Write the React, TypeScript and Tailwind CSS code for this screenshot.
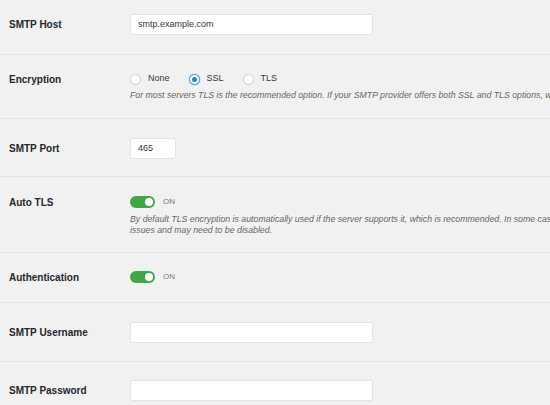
import React from 'react';

const font = { fontFamily: '"Liberation Sans", Arial, sans-serif' };

function Label({ children, h }: { children: React.ReactNode; h: string }) {
  return (
    <div className={`w-[130px] shrink-0 pl-[9px] flex items-center text-[10px] font-bold text-[#23282d] ${h}`}>
      {children}
    </div>
  );
}

function Radio({ label, checked }: { label: string; checked?: boolean }) {
  return (
    <div className="flex items-center gap-[7px]">
      <span
        className={`w-[11px] h-[11px] rounded-full bg-white border flex items-center justify-center ${
          checked ? 'border-[#5b9dd9] shadow-[0_0_1px_#1e8cbe]' : 'border-[#c8ccd0]'
        }`}
      >
        {checked && <span className="w-[5px] h-[5px] rounded-full bg-[#1e8cbe]" />}
      </span>
      <span className="text-[9px] text-[#32373c]">{label}</span>
    </div>
  );
}

function Toggle() {
  return (
    <div className="flex items-center gap-[8px] h-[12px]">
      <span className="w-[25px] h-[12px] rounded-full bg-[#3fa845] flex items-center justify-end pr-[2px]">
        <span className="w-[8px] h-[8px] rounded-full bg-white" />
      </span>
      <span className="text-[8px] text-[#72777c]">ON</span>
    </div>
  );
}

function Input({ value, w }: { value?: string; w: string }) {
  return (
    <div
      className={`h-[21px] bg-white border border-[#e4e4e4] rounded-[2px] flex items-center px-[7px] text-[9px] text-[#32373c] ${w}`}
    >
      {value}
    </div>
  );
}

export default function App() {
  return (
    <div className="w-[550px] h-[405px] overflow-hidden bg-[#f1f1f1]" style={font}>
      {/* SMTP Host */}
      <div className="flex pt-[14px] pb-[19px] border-b border-[#e3e3e3]">
        <Label h="h-[21px]">SMTP Host</Label>
        <Input value="smtp.example.com" w="w-[243px]" />
      </div>

      {/* Encryption */}
      <div className="flex pt-[18px] pb-[17px] border-b border-[#e3e3e3]">
        <Label h="h-[12px]">Encryption</Label>
        <div>
          <div className="flex items-center gap-[19px] h-[12px]">
            <Radio label="None" />
            <Radio label="SSL" checked />
            <Radio label="TLS" />
          </div>
          <p className="mt-[5px] text-[8.75px] leading-[11px] italic text-[#666] whitespace-nowrap">
            For most servers TLS is the recommended option. If your SMTP provider offers both SSL and TLS options, we
            recommend using TLS.
          </p>
        </div>
      </div>

      {/* SMTP Port */}
      <div className="flex pt-[19px] pb-[17px] border-b border-[#e3e3e3]">
        <Label h="h-[21px]">SMTP Port</Label>
        <Input value="465" w="w-[46px]" />
      </div>

      {/* Auto TLS */}
      <div className="flex pt-[19px] pb-[16px] border-b border-[#e3e3e3]">
        <Label h="h-[12px]">Auto TLS</Label>
        <div>
          <Toggle />
          <p className="mt-[6px] text-[8.75px] leading-[11px] italic text-[#666] whitespace-nowrap">
            By default TLS encryption is automatically used if the server supports it, which is recommended. In some
            cases, due to server misconfigurations, this can cause
            <br />
            issues and may need to be disabled.
          </p>
        </div>
      </div>

      {/* Authentication */}
      <div className="flex pt-[18px] pb-[19px] border-b border-[#e3e3e3]">
        <Label h="h-[12px]">Authentication</Label>
        <Toggle />
      </div>

      {/* SMTP Username */}
      <div className="flex pt-[19px] pb-[18px] border-b border-[#e3e3e3]">
        <Label h="h-[21px]">SMTP Username</Label>
        <Input w="w-[243px]" />
      </div>

      {/* SMTP Password */}
      <div className="flex pt-[18px] pb-[18px]">
        <Label h="h-[21px]">SMTP Password</Label>
        <Input w="w-[243px]" />
      </div>
    </div>
  );
}
